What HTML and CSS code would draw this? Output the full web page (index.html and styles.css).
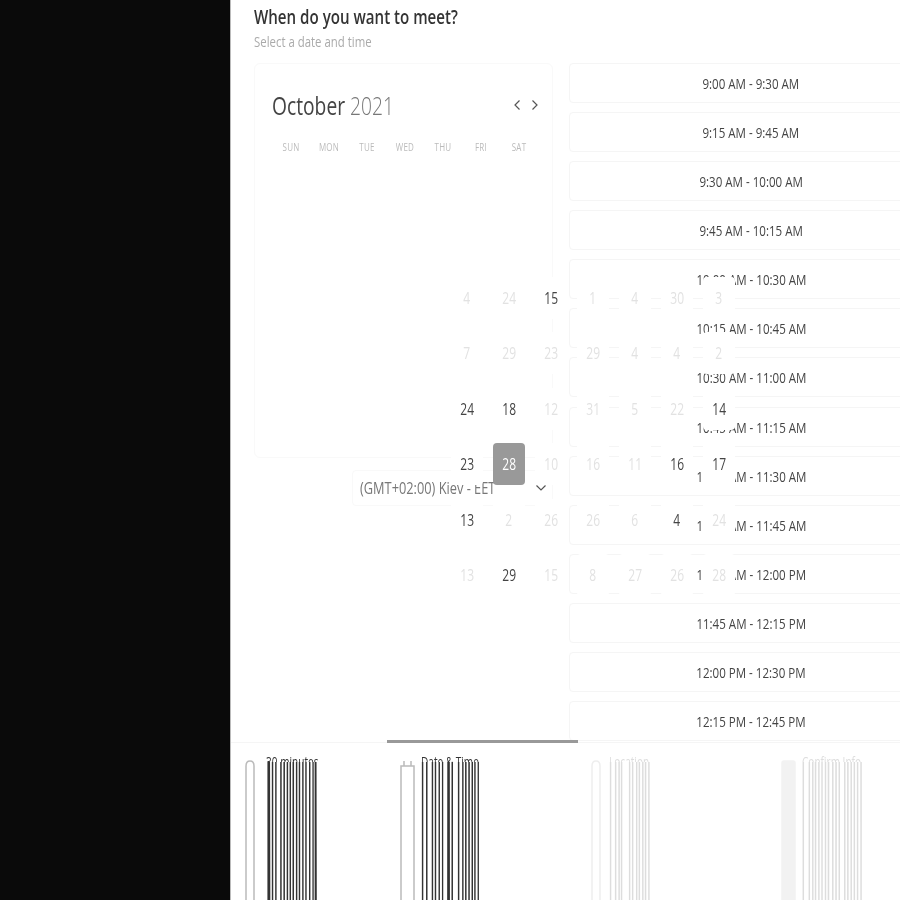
FILE: index.html
```html
<!DOCTYPE html>
<html lang="en">
<head>
    <meta charset="UTF-8">
    <meta name="viewport" content="width=device-width, initial-scale=1.0">
    <title>When do you want to meet?</title>
    <link rel="stylesheet" href="styles.css">
</head>
<body>
    <div class="sidebar"></div>
    <div class="main">
        <div class="content">
            <div class="heading">
                <h2><span>When do you want to meet?</span></h2>
                <p><span>Select a date and time</span></p>
            </div>
            <div class="columns">
                <div class="left">
                    <div class="calendar">
                        <div class="month-row">
                            <div class="month"><span>October <em>2021</em></span></div>
                            <div class="arrows">
                                <svg width="8" height="12" viewBox="0 0 8 12"><path d="M6.5 1.5 2 6l4.5 4.5"/></svg>
                                <svg width="8" height="12" viewBox="0 0 8 12"><path d="M1.5 1.5 6 6l-4.5 4.5"/></svg>
                            </div>
                        </div>
                        <div class="weekdays">
                            <span>SUN</span><span>MON</span><span>TUE</span><span>WED</span><span>THU</span><span>FRI</span><span>SAT</span>
                        </div>
                    </div>
                    <div class="timezone">
                        <span class="tz-text">(GMT+02:00) Kiev - EET</span>
                        <svg width="12" height="8" viewBox="0 0 12 8"><path d="M1.5 1.5 6 6l4.5-4.5"/></svg>
                    </div>
                </div>
                <div class="slots">
                    <button class="slot"><span>9:00 AM - 9:30 AM</span></button>
                    <button class="slot"><span>9:15 AM - 9:45 AM</span></button>
                    <button class="slot"><span>9:30 AM - 10:00 AM</span></button>
                    <button class="slot"><span>9:45 AM - 10:15 AM</span></button>
                    <button class="slot"><span>10:00 AM - 10:30 AM</span></button>
                    <button class="slot"><span>10:15 AM - 10:45 AM</span></button>
                    <button class="slot"><span>10:30 AM - 11:00 AM</span></button>
                    <button class="slot"><span>10:45 AM - 11:15 AM</span></button>
                    <button class="slot"><span>11:00 AM - 11:30 AM</span></button>
                    <button class="slot"><span>11:15 AM - 11:45 AM</span></button>
                    <button class="slot"><span>11:30 AM - 12:00 PM</span></button>
                    <button class="slot"><span>11:45 AM - 12:15 PM</span></button>
                    <button class="slot"><span>12:00 PM - 12:30 PM</span></button>
                    <button class="slot"><span>12:15 PM - 12:45 PM</span></button>
                </div>
            </div>
        </div>

        <!-- day cells sit over the columns -->
        <div class="days">
            <div class="day"><span>4</span></div><div class="day"><span>24</span></div><div class="day on"><span>15</span></div><div class="day"><span>1</span></div><div class="day"><span>4</span></div><div class="day"><span>30</span></div><div class="day"><span>3</span></div>
            <div class="day"><span>7</span></div><div class="day"><span>29</span></div><div class="day"><span>23</span></div><div class="day"><span>29</span></div><div class="day"><span>4</span></div><div class="day"><span>4</span></div><div class="day"><span>2</span></div>
            <div class="day on"><span>24</span></div><div class="day on"><span>18</span></div><div class="day"><span>12</span></div><div class="day"><span>31</span></div><div class="day"><span>5</span></div><div class="day"><span>22</span></div><div class="day on"><span>14</span></div>
            <div class="day on"><span>23</span></div><div class="day selected"><span>28</span></div><div class="day"><span>10</span></div><div class="day"><span>16</span></div><div class="day"><span>11</span></div><div class="day on"><span>16</span></div><div class="day on"><span>17</span></div>
            <div class="day on"><span>13</span></div><div class="day"><span>2</span></div><div class="day"><span>26</span></div><div class="day"><span>26</span></div><div class="day"><span>6</span></div><div class="day on"><span>4</span></div><div class="day"><span>24</span></div>
            <div class="day"><span>13</span></div><div class="day on"><span>29</span></div><div class="day"><span>15</span></div><div class="day"><span>8</span></div><div class="day"><span>27</span></div><div class="day"><span>26</span></div><div class="day"><span>28</span></div>
        </div>

        <div class="steps">
            <div class="step done first">
                <svg class="step-icon" width="10" height="150" viewBox="0 0 10 150"><path d="M1 150V6q0-5 4-5t4 5v144"/></svg>
                <div class="step-label"><span class="step-top">30 minutes</span><span class="step-bars" aria-hidden="true"><span>30 minutes</span></span></div>
            </div>
            <div class="step done active">
                <svg class="step-icon wide" width="15" height="150" viewBox="0 0 15 150"><path d="M1 150V6h13v144M4 6V1M11 6V1"/></svg>
                <div class="step-label"><span class="step-top">Date &amp; Time</span><span class="step-bars" aria-hidden="true"><span>Date &amp; Time</span></span></div>
            </div>
            <div class="step todo third">
                <svg class="step-icon" width="10" height="150" viewBox="0 0 10 150"><path d="M1 150V6q0-5 4-5t4 5v144"/></svg>
                <div class="step-label"><span class="step-top">Location</span><span class="step-bars" aria-hidden="true"><span>Location</span></span></div>
            </div>
            <div class="step todo fourth">
                <svg class="step-icon wide" width="15" height="150" viewBox="0 0 15 150"><path class="solid" d="M1 150V3q0-2 2-2h9q2 0 2 2v147z"/></svg>
                <div class="step-label"><span class="step-top">Confirm Info</span><span class="step-bars" aria-hidden="true"><span>Confirm Info</span></span></div>
            </div>
        </div>
    </div>
</body>
</html>
```

FILE: styles.css
```css
html, body {
    height: 100%;
}
body {
    font-family: "Open Sans", Arial, sans-serif;
    margin: 0;
    padding: 0;
    background-color: #0a0a0a;
    display: flex;
    overflow: hidden;
}
.sidebar {
    width: 230px;
    flex-shrink: 0;
    background-color: #0a0a0a;
}
.main {
    position: relative;
    width: 670px;
    height: 900px;
    background-color: #fff;
    border-left: 1px solid #bbb;
    box-sizing: border-box;
    display: flex;
    flex-direction: column;
    overflow: hidden;
    filter: blur(0.4px);
}
.content {
    height: 742px;
    padding: 6px 0 0 23px;
    box-sizing: border-box;
    overflow: hidden;
    flex-shrink: 0;
}
.heading h2 {
    margin: 0;
    font-size: 19px;
    line-height: 22px;
    font-weight: 600;
    color: #333;
}
.heading p {
    margin: 3px 0 0;
    font-size: 15px;
    line-height: 20px;
    color: #aaa;
}
.heading h2 span {
    display: inline-block;
    transform: scaleX(0.795);
    transform-origin: left;
}
.heading p span {
    display: inline-block;
    transform: scaleX(0.76);
    transform-origin: left;
}
.columns {
    display: flex;
    gap: 16px;
    margin-top: 12px;
}
.left {
    width: 299px;
    flex-shrink: 0;
}
.calendar {
    height: 395px;
    padding: 0 0 0 17px;
    border: 1px solid #f9f9f9;
    border-radius: 6px;
    box-sizing: border-box;
}
.month-row {
    display: flex;
    justify-content: space-between;
    align-items: center;
    padding: 24px 13px 0 0;
}
.month {
    font-size: 26px;
    line-height: 34px;
    color: #444;
}
.month span {
    display: inline-block;
    transform: scaleX(0.74);
    transform-origin: left;
}
.month em {
    font-style: normal;
    font-weight: 300;
    color: #777;
}
.arrows {
    display: flex;
    gap: 10px;
}
.arrows path, .timezone path {
    fill: none;
    stroke: #555;
    stroke-width: 1.2;
}
.weekdays {
    display: grid;
    grid-template-columns: repeat(7, 38px);
    margin-top: 18px;
    font-size: 10px;
    line-height: 14px;
    letter-spacing: 0.3px;
    color: #bbb;
    text-align: center;
}
.weekdays span {
    transform: scaleX(0.8);
}
.timezone {
    display: flex;
    justify-content: space-between;
    align-items: center;
    width: 201px;
    height: 36px;
    margin: 12px 0 0 auto;
    padding: 0 5px 0 7px;
    border: 1px solid #f9f9f9;
    border-radius: 4px;
    box-sizing: border-box;
    font-size: 16px;
    color: #777;
}
.tz-text {
    display: inline-block;
    white-space: nowrap;
    transform: scaleX(0.8);
    transform-origin: left;
}
.slots {
    display: flex;
    flex-direction: column;
    gap: 9.08px;
    width: 364px;
    flex-shrink: 0;
}
.slot {
    height: 40px;
    flex-shrink: 0;
    padding: 0;
    background-color: #fff;
    border: 1px solid #f5f5f5;
    border-radius: 4px;
    font-family: inherit;
    font-size: 15px;
    color: #444;
}
.slot span {
    display: inline-block;
    transform: scaleX(0.77);
}
.days {
    position: absolute;
    left: 220px;
    top: 276.5px;
    display: grid;
    grid-template-columns: repeat(7, 32px);
    grid-auto-rows: 42px;
    column-gap: 10px;
    row-gap: 13.5px;
}
.day {
    display: flex;
    justify-content: center;
    align-items: center;
    background-color: #fff;
    border-radius: 4px;
    font-size: 16px;
    color: #e2e2e2;
}
.day span {
    transform: scaleX(0.75);
}
.day.on {
    color: #444;
}
.day.selected {
    background-color: #999;
    color: #fff;
}
.steps {
    flex: 1;
    display: grid;
    grid-template-columns: 156px repeat(3, 191px);
    border-top: 1px solid #f5f5f5;
    position: relative;
}
.step {
    display: flex;
    gap: 11px;
    padding: 17px 0 0 13px;
    position: relative;
}
.step.first {
    padding-left: 14px;
}
.step.third {
    gap: 8px;
}
.step.fourth {
    padding-left: 12px;
}
.step.active::before {
    content: "";
    position: absolute;
    left: 0;
    top: -3px;
    width: 191px;
    height: 3px;
    background-color: #999;
}
.step-icon {
    flex-shrink: 0;
}
.step-icon.wide {
    margin-right: -5px;
}
.step-icon path {
    fill: none;
    stroke: #bbb;
    stroke-width: 1.5;
}
.step-icon path.solid {
    fill: #f2f2f2;
    stroke: #f2f2f2;
}
.step.todo .step-icon path:not(.solid) {
    stroke: #eee;
}
.step-label {
    position: relative;
    margin-top: -5px;
    font-size: 14px;
    line-height: 14px;
    font-weight: 700;
    color: #333;
    white-space: nowrap;
    transform: scaleX(0.72);
    transform-origin: left;
}
.step.todo .step-label {
    color: #ddd;
}
.step-top {
    display: block;
    height: 7px;
    overflow: hidden;
    font-weight: 400;
}
/* the label's lower part runs on down the page as bars */
.step-bars {
    display: block;
    height: 160px;
    overflow: hidden;
    position: relative;
}
.step-bars span {
    display: block;
    transform: scale(0.95, 800);
    transform-origin: 0 7px;
}
```
